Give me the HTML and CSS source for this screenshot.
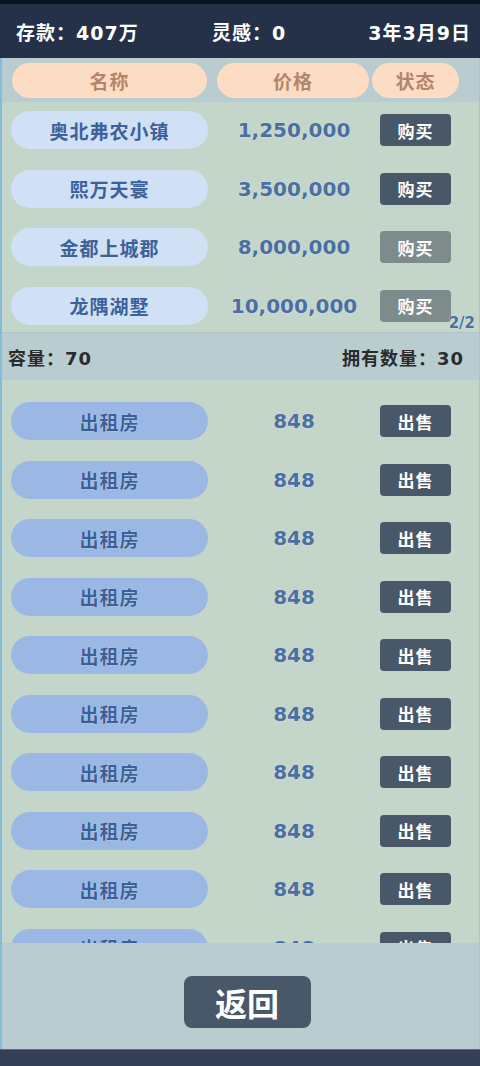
FILE: index.html
```html
<!DOCTYPE html>
<html lang="zh-CN">

<head>
    <meta charset="UTF-8">
    <meta name="viewport" content="width=device-width, initial-scale=1.0">
    <title>房产</title>
    <link rel="stylesheet" href="styles.css">
</head>

<body>
    <div class="topline"></div>

    <!-- Player status -->
    <header class="status">
        <span class="stat">存款：407万</span>
        <span class="stat">灵感：0</span>
        <span class="stat date">3年3月9日</span>
    </header>

    <main class="panel">
        <div class="thead">
            <span class="th th-name">名称</span>
            <span class="th th-price">价格</span>
            <span class="th th-state">状态</span>
        </div>

        <!-- Houses for sale -->
        <div class="shop">
            <div class="row">
                <span class="name">奥北弗农小镇</span>
                <span class="price">1,250,000</span>
                <button class="btn">购买</button>
            </div>
            <div class="row">
                <span class="name">熙万天寰</span>
                <span class="price">3,500,000</span>
                <button class="btn">购买</button>
            </div>
            <div class="row">
                <span class="name">金都上城郡</span>
                <span class="price">8,000,000</span>
                <button class="btn off">购买</button>
            </div>
            <div class="row">
                <span class="name">龙隅湖墅</span>
                <span class="price">10,000,000</span>
                <button class="btn off">购买</button>
            </div>
            <span class="page">2/2</span>
        </div>

        <div class="info">
            <span>容量：70</span>
            <span>拥有数量：30</span>
        </div>

        <div class="owned" id="owned"></div>

        <div class="footer">
            <button class="back">返回</button>
        </div>
    </main>

    <div class="bottombar"></div>

    <script>
        const owned = document.getElementById('owned');
        for (let i = 0; i < 10; i++) {
            const row = document.createElement('div');
            row.className = 'row';
            row.innerHTML = '<span class="name rent">出租房</span>' +
                '<span class="price">848</span>' +
                '<button class="btn">出售</button>';
            owned.appendChild(row);
        }
    </script>
</body>

</html>
```

FILE: styles.css
```css
body {
    margin: 0;
    padding: 0;
    width: 480px;
    height: 1066px;
    overflow: hidden;
    background: #253049;
    font-family: "DejaVu Sans", "Noto Sans CJK SC", sans-serif;
    font-weight: 700;
}

button {
    font-family: inherit;
    font-weight: 700;
    border: none;
    cursor: pointer;
}

.topline {
    height: 4px;
    background: #0b1322;
}

.status {
    height: 54px;
    display: grid;
    grid-template-columns: 196px 1fr auto;
    align-items: center;
    padding: 0 9px 0 16px;
    color: #fff;
    font-size: 19px;
    letter-spacing: 1px;
}

.panel {
    height: 991px;
    display: flex;
    flex-direction: column;
    border-left: 2px solid #86bcd6;
    border-right: 1px solid #a9c4cc;
    background: #c4d6ca;
}

.thead {
    height: 44px;
    box-sizing: border-box;
    padding: 5px 0 0 10px;
    display: flex;
    background: #b9cdd1;
}

.th {
    height: 35px;
    border-radius: 18px;
    background: #fddcc4;
    color: #b3866a;
    font-size: 19px;
    letter-spacing: 1px;
    display: flex;
    align-items: center;
    justify-content: center;
}

.th-name {
    width: 195px;
}

.th-price {
    width: 152px;
    margin-left: 10px;
}

.th-state {
    width: 87px;
    margin-left: 3px;
}

.shop {
    position: relative;
    height: 231px;
    box-sizing: border-box;
    padding: 9px 0 8px 9px;
    display: flex;
    flex-direction: column;
    gap: 20.67px;
    border-bottom: 1px solid #b0c6c4;
}

.row {
    height: 38px;
    flex-shrink: 0;
    display: flex;
    align-items: center;
}

.name {
    width: 197px;
    height: 38px;
    border-radius: 19px;
    background: #d0e0f5;
    color: #3d6299;
    font-size: 19px;
    letter-spacing: 1px;
    display: flex;
    align-items: center;
    justify-content: center;
}

.name.rent {
    background: #9ab8e3;
    color: #3b5f96;
    text-shadow: 0 0 1px #e4eeff;
}

.price {
    width: 172px;
    text-align: center;
    color: #4a6fa0;
    font-size: 20px;
    text-shadow: 0 0 1px #eef4ff;
}

.btn {
    width: 71px;
    height: 32px;
    border-radius: 4px;
    background: #485869;
    color: #fff;
    font-size: 17px;
    letter-spacing: 1px;
}

.btn.off {
    background: #7e8b8d;
}

.page {
    position: absolute;
    right: 4px;
    bottom: 0;
    color: #4a6fa0;
    font-size: 15px;
    text-shadow: 0 0 1px #eef4ff;
}

.info {
    height: 47px;
    box-sizing: border-box;
    padding: 0 15px 0 6px;
    display: flex;
    justify-content: space-between;
    align-items: center;
    background: #b9cdd1;
    color: #2b2b2b;
    font-size: 18px;
    letter-spacing: 1px;
}

.owned {
    height: 563px;
    overflow: hidden;
    box-sizing: border-box;
    padding: 22px 0 0 9px;
    display: flex;
    flex-direction: column;
    gap: 20.56px;
}

.footer {
    flex: 1;
    display: flex;
    justify-content: center;
    padding: 33px 0 0 13px;
    background: #b9cdd1;
}

.back {
    width: 127px;
    height: 52px;
    border-radius: 8px;
    background: #485868;
    color: #fff;
    font-size: 32px;
}

.bottombar {
    height: 17px;
    border-top: 1px solid #5c6b72;
    background: #343f55;
}
```
